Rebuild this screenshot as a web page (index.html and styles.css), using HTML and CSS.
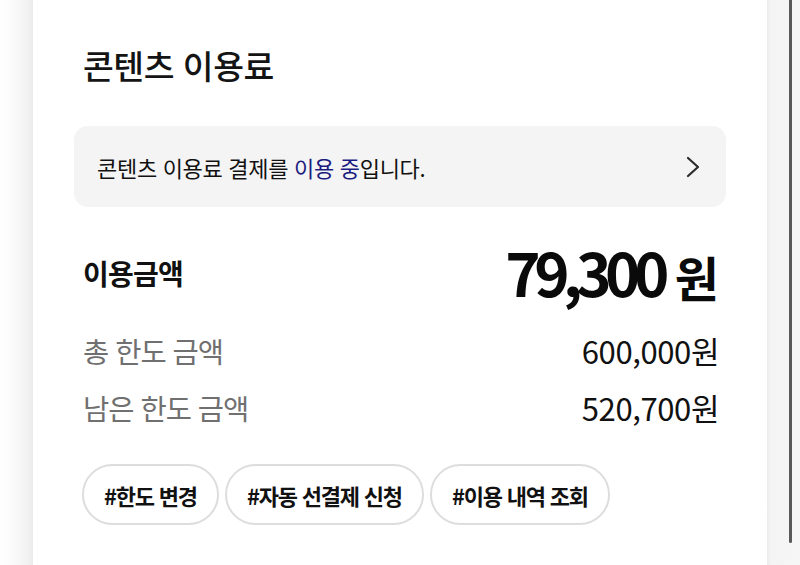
FILE: index.html
```html
<!DOCTYPE html>
<html lang="ko">
<head>
<meta charset="utf-8">
<link rel="stylesheet" href="styles.css">
</head>
<body>
<div class="page">
  <div class="gutter-left"></div>
  <main class="card">
    <h1 class="title">콘텐츠 이용료</h1>
    <div class="notice">
      <p class="notice-text">콘텐츠 이용료 결제를 <span class="accent">이용 중</span>입니다.</p>
      <svg class="chevron" width="16" height="22" viewBox="0 0 16 22"><path d="M3 2 L13 11 L3 20" fill="none" stroke="#2b2b2b" stroke-width="2.2" stroke-linecap="round" stroke-linejoin="round"/></svg>
    </div>
    <div class="row row-main">
      <span class="label-main">이용금액</span>
      <span class="value-main">79,300<span class="won-main">원</span></span>
    </div>
    <div class="row row-sub first">
      <span class="label-sub">총 한도 금액</span>
      <span class="value-sub">600,000원</span>
    </div>
    <div class="row row-sub second">
      <span class="label-sub">남은 한도 금액</span>
      <span class="value-sub">520,700원</span>
    </div>
    <div class="chips">
      <span class="chip">#한도 변경</span>
      <span class="chip">#자동 선결제 신청</span>
      <span class="chip">#이용 내역 조회</span>
    </div>
  </main>
  <div class="gutter-right"><div class="scrollbar"></div></div>
</div>
</body>
</html>
```

FILE: styles.css
```css
* { box-sizing: border-box; }
html, body { margin: 0; padding: 0; }
body {
  width: 800px;
  height: 565px;
  overflow: hidden;
  background: #ffffff;
  font-family: "Noto Sans CJK KR", "Noto Sans", sans-serif;
  color: #111111;
}
.page {
  display: flex;
  height: 565px;
}
.gutter-left {
  width: 33px;
  flex: none;
  background: linear-gradient(to right, #ffffff 0px, #fbfbfb 12px, #f1f1f1 28px, #ebebeb 33px);
}
.card {
  width: 734px;
  flex: none;
  background: #ffffff;
  padding: 45px 41px 0 41px;
}
.gutter-right {
  flex: 1;
  background: linear-gradient(to right, #ebebeb 0px, #f4f4f4 4px, #f6f6f6 100%);
  display: flex;
  justify-content: flex-start;
  padding-left: 22px;
}
.scrollbar {
  width: 3px;
  height: 543px;
  background: #5a5a5a;
  border-radius: 0 0 2px 2px;
}
.title {
  margin: 0 0 0 9px;
  height: 40px;
  line-height: 40px;
  font-size: 33.5px;
  font-weight: 500;
  letter-spacing: -0.5px;
  color: #141414;
}
.notice {
  margin-top: 41px;
  height: 81px;
  background: #f4f4f4;
  border-radius: 14px;
  display: flex;
  align-items: center;
  justify-content: space-between;
  padding: 0 25px 0 23px;
}
.notice-text {
  margin: 0;
  font-size: 22px;
  letter-spacing: -0.3px;
  color: #111111;
}
.accent { color: #1c1c80; }
.chevron { display: block; }
.row {
  display: flex;
  justify-content: space-between;
  align-items: center;
  padding: 0 7px 0 9px;
}
.row-main {
  margin-top: 33px;
  height: 66px;
}
.label-main {
  font-size: 28px;
  font-weight: 700;
  letter-spacing: -0.8px;
}
.value-main {
  font-size: 60px;
  font-weight: 700;
  letter-spacing: -6.5px;
  line-height: 66px;
  color: #0a0a0a;
}
.won-main {
  font-size: 48px;
  margin-left: 12px;
  letter-spacing: 0;
}
.row-sub { height: 44px; }
.row-sub.first { margin-top: 22px; }
.row-sub.second { margin-top: 13px; }
.label-sub {
  font-size: 28.5px;
  color: #707070;
  letter-spacing: -1px;
}
.value-sub {
  font-size: 31px;
  color: #111111;
  letter-spacing: -0.4px;
}
.chips {
  display: flex;
  gap: 6px;
  margin-top: 35px;
  padding-left: 8px;
}
.chip {
  height: 61px;
  padding: 0 20px;
  border: 2px solid #dddddd;
  border-radius: 31px;
  display: flex;
  align-items: center;
  font-size: 22px;
  font-weight: 700;
  letter-spacing: -1.2px;
  color: #111111;
}
```
